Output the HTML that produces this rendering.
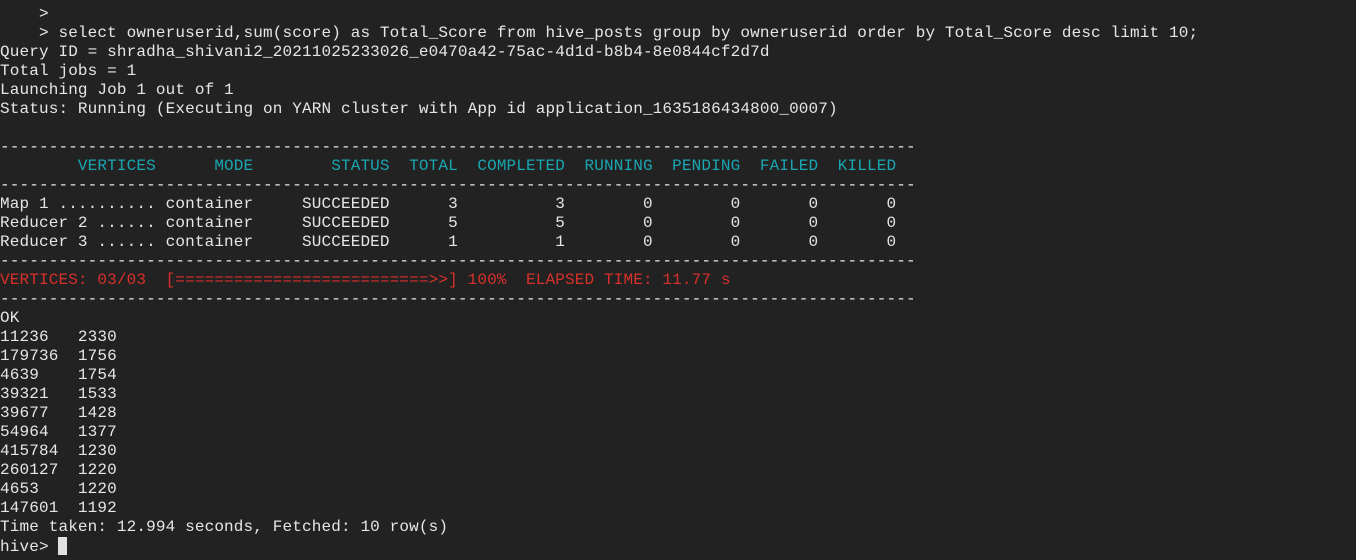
<!DOCTYPE html>
<html><head><meta charset="utf-8"><style>
html,body{margin:0;padding:0;background:#222222;width:1356px;height:560px;overflow:hidden}
pre{margin:0;padding:5px 0 0 0;font-family:"Liberation Mono",monospace;font-size:16px;line-height:19px;color:#e6e6e6;white-space:pre;letter-spacing:0.14px}
.t{letter-spacing:0.14px}
.c{color:#19a6b2}
.r{color:#d8302b}
.cur{display:inline-block;width:9px;height:18px;background:#e0e0e0;vertical-align:-4px}
</style></head><body><pre>    &gt;
    &gt; select owneruserid,sum(score) as Total_Score from hive_posts group by owneruserid order by Total_Score desc limit 10;
Query ID = shradha_shivani2_20211025233026_e0470a42-75ac-4d1d-b8b4-8e0844cf2d7d
Total jobs = 1
Launching Job 1 out of 1
Status: Running (Executing on YARN cluster with App id application_1635186434800_0007)

<span class="t">----------------------------------------------------------------------------------------------</span>
<span class="t c">        VERTICES      MODE        STATUS  TOTAL  COMPLETED  RUNNING  PENDING  FAILED  KILLED  </span>
<span class="t">----------------------------------------------------------------------------------------------</span>
<span class="t">Map 1 .......... container     SUCCEEDED      3          3        0        0       0       0  </span>
<span class="t">Reducer 2 ...... container     SUCCEEDED      5          5        0        0       0       0  </span>
<span class="t">Reducer 3 ...... container     SUCCEEDED      1          1        0        0       0       0  </span>
<span class="t">----------------------------------------------------------------------------------------------</span>
<span class="t r">VERTICES: 03/03  [==========================&gt;&gt;] 100%  ELAPSED TIME: 11.77 s    </span>
<span class="t">----------------------------------------------------------------------------------------------</span>
OK
11236   2330
179736  1756
4639    1754
39321   1533
39677   1428
54964   1377
415784  1230
260127  1220
4653    1220
147601  1192
Time taken: 12.994 seconds, Fetched: 10 row(s)
hive&gt; <span class="cur"></span></pre></body></html>
